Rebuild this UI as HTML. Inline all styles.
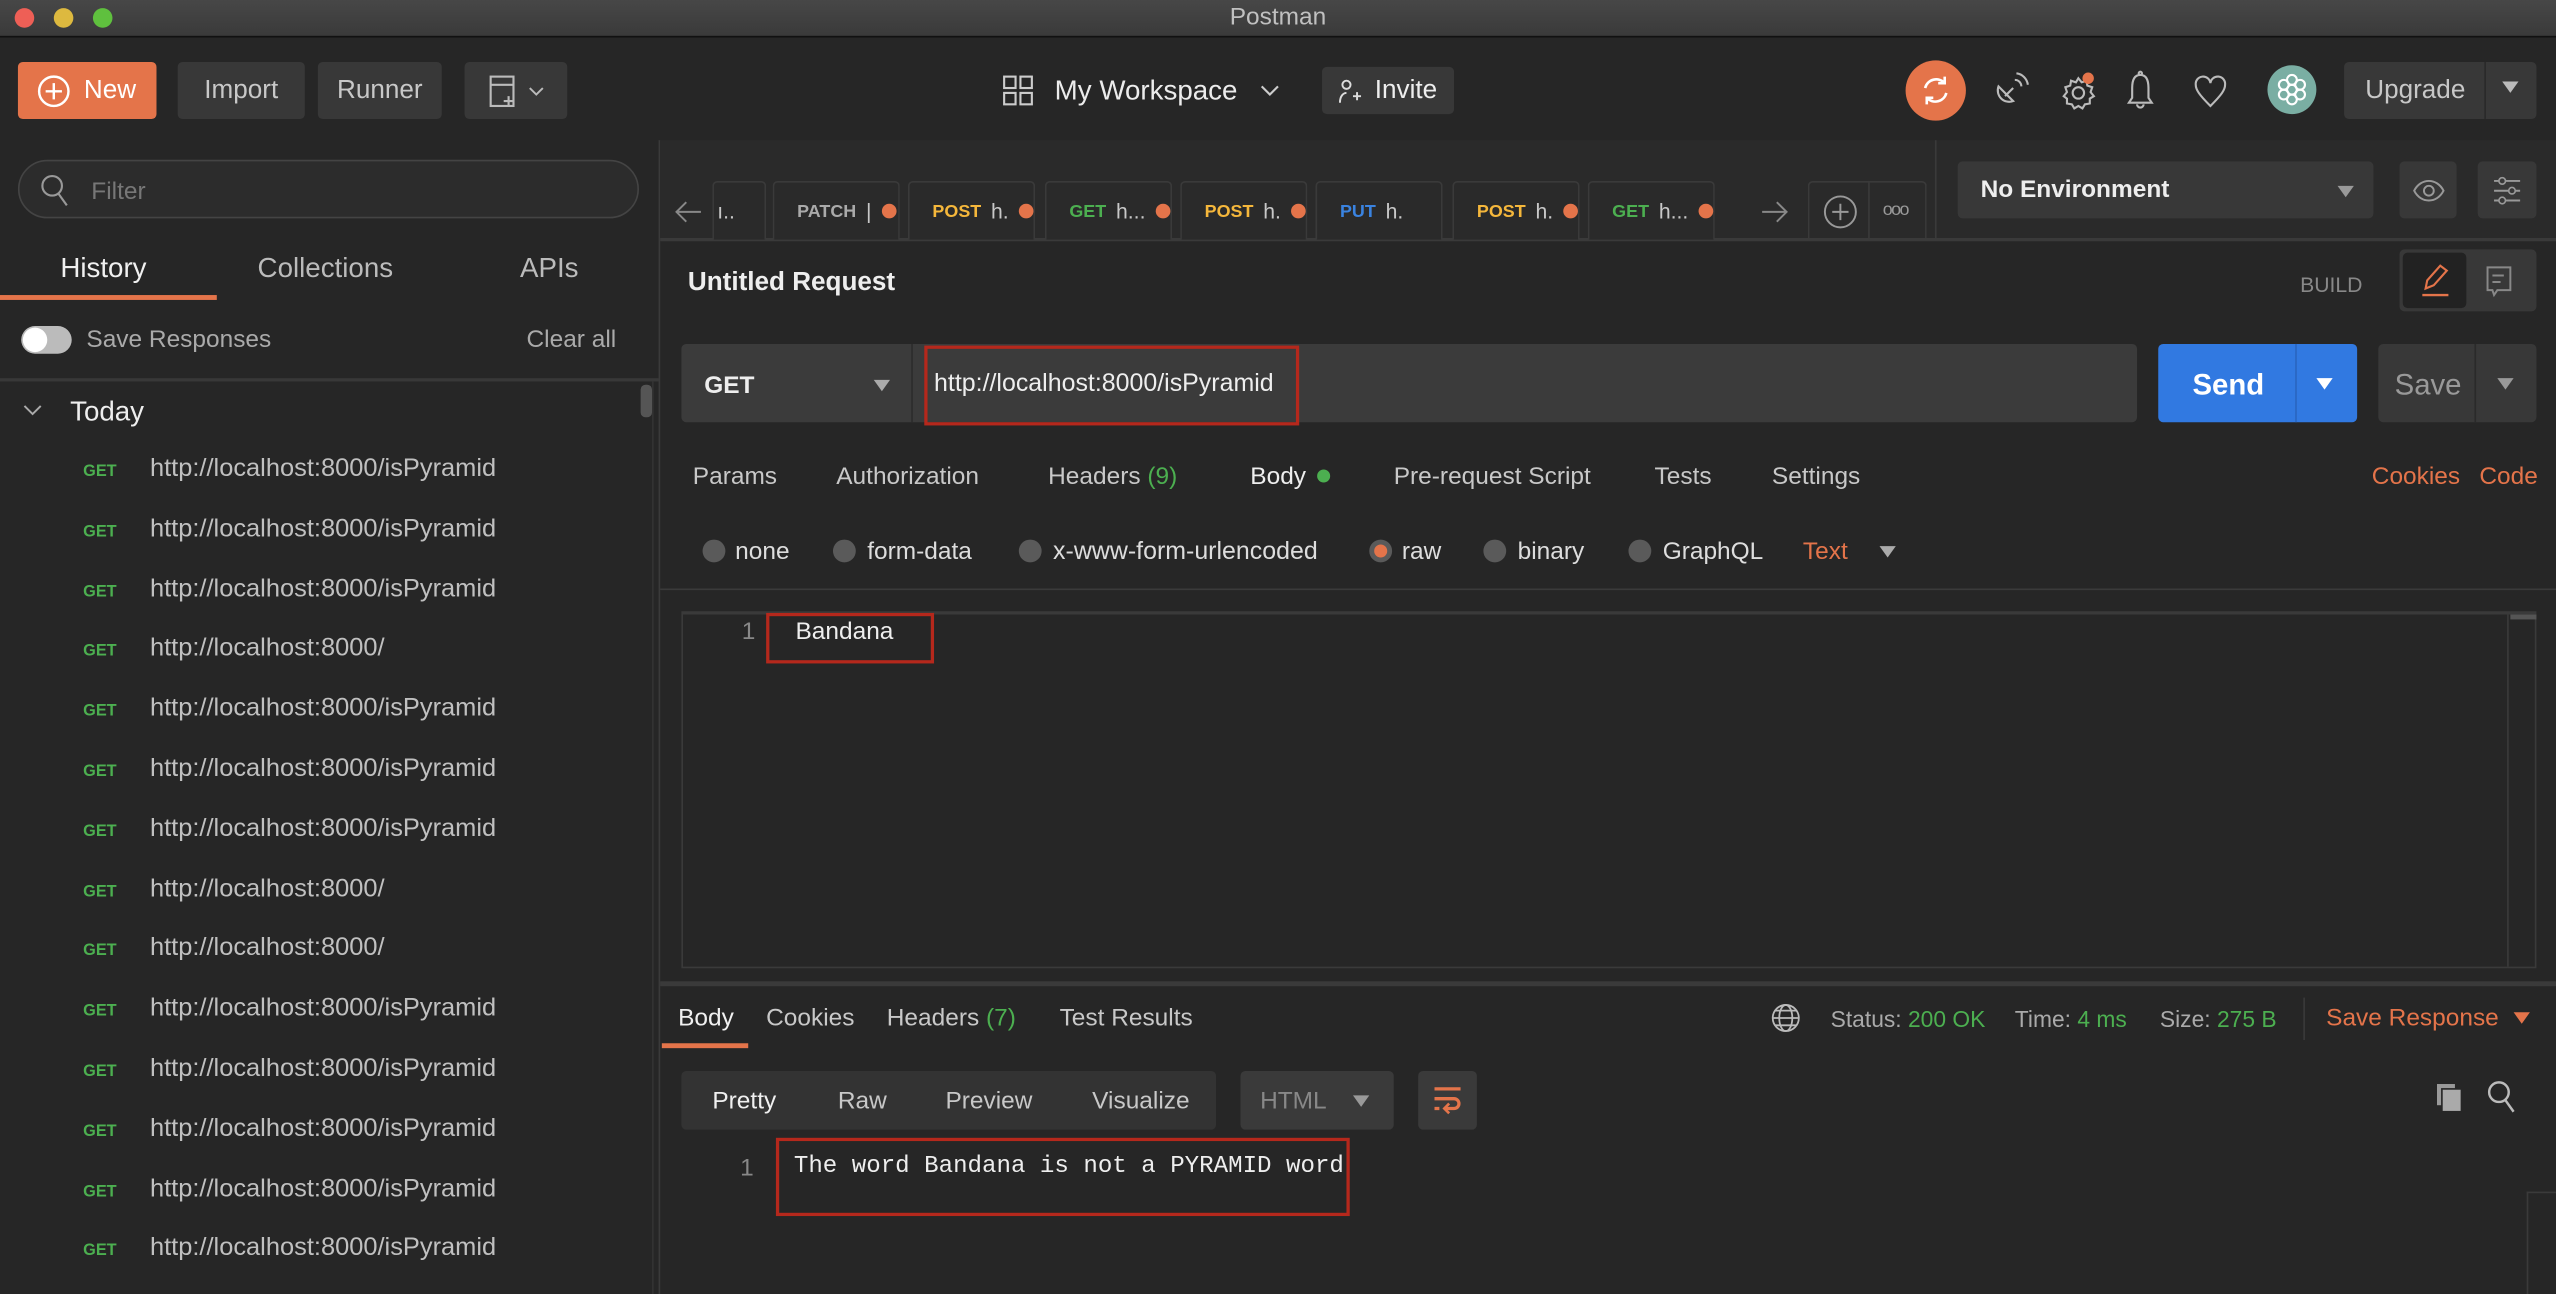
<!DOCTYPE html>
<html><head><meta charset="utf-8"><style>
*{margin:0;padding:0;box-sizing:border-box}
html,body{width:2556px;height:1294px;overflow:hidden;background:#262626}
#s{position:absolute;left:0;top:0;width:1568px;height:794px;transform:scale(1.63010);transform-origin:0 0;background:#262626;font-family:"Liberation Sans",sans-serif;color:#c8c8c8;font-size:15px}
.a{position:absolute;white-space:nowrap}
.btn{position:absolute;background:#383838;border-radius:3px;color:#c8c8c8;font-size:16px;display:flex;align-items:center;justify-content:center}
.g{color:#4caf50;font-weight:bold;font-size:10px}
.o{color:#e4744a}
.dot{display:inline-block;width:9px;height:9px;border-radius:50%;background:#e4744a;vertical-align:1px}
.tab{position:absolute;top:111px;height:36px;width:78px;border:1px solid #3a3a3a;border-bottom:none;border-radius:3px 3px 0 0;background:#2a2a2a;font-size:13px;display:flex;align-items:center;padding-left:14px;gap:6px}
.m{font-size:11px;font-weight:bold}
.rad{position:absolute;top:331px;width:14px;height:14px;border-radius:50%;background:#5a5a5a}
</style></head><body><div id="s">
<div class="a" style="left:0;top:0;width:1568px;height:23px;background:linear-gradient(#474747,#3a3a3a);border-bottom:1px solid #111"></div>
<div class="a" style="left:9px;top:5px;width:12px;height:12px;border-radius:50%;background:#ee5f56"></div>
<div class="a" style="left:33px;top:5px;width:12px;height:12px;border-radius:50%;background:#ddb93f"></div>
<div class="a" style="left:57px;top:5px;width:12px;height:12px;border-radius:50%;background:#5fc03e"></div>
<div class="a" style="left:0;width:1568px;top:2px;text-align:center;color:#c0c0c0;font-size:15px">Postman</div>
<div class="btn" style="left:11px;top:38px;width:85px;height:35px;background:#e4744a;color:#fff;gap:8px"><svg width="20" height="20" viewBox="0 0 20 20"><circle cx="10" cy="10" r="9" fill="none" stroke="#fff" stroke-width="1.5"/><path d="M10 5v10M5 10h10" stroke="#fff" stroke-width="1.5"/></svg>New</div>
<div class="btn" style="left:109px;top:38px;width:78px;height:35px">Import</div>
<div class="btn" style="left:195px;top:38px;width:76px;height:35px">Runner</div>
<div class="btn" style="left:285px;top:38px;width:63px;height:35px;gap:6px"><svg width="18" height="22" viewBox="0 0 18 22"><rect x="1" y="2" width="14" height="18" fill="none" stroke="#bbb" stroke-width="1.3"/><path d="M1 7h14M12 14v6M9 17h6" stroke="#bbb" stroke-width="1.3"/></svg><svg width="10" height="8" viewBox="0 0 10 8"><path d="M1 2l4 4 4-4" fill="none" stroke="#bbb" stroke-width="1.2"/></svg></div>
<svg class="a" style="left:615px;top:46px" width="20" height="20" viewBox="0 0 20 20"><g fill="none" stroke="#ccc" stroke-width="1.3"><rect x="1" y="1" width="7" height="7"/><rect x="11" y="1" width="7" height="7"/><rect x="1" y="11" width="7" height="7"/><rect x="11" y="11" width="7" height="7"/></g></svg>
<div class="a" style="left:647px;top:46px;color:#ececec;font-size:17px">My Workspace</div>
<svg class="a" style="left:773px;top:52px" width="12" height="8" viewBox="0 0 12 8"><path d="M1 1l5 5 5-5" fill="none" stroke="#ccc" stroke-width="1.3"/></svg>
<div class="btn" style="left:811px;top:41px;width:81px;height:29px;color:#eee;gap:8px"><svg width="14" height="16" viewBox="0 0 14 16"><circle cx="5" cy="4" r="2.5" fill="none" stroke="#ddd" stroke-width="1.2"/><path d="M1 15c0-4 2-6 4-6M9 11h5M11.5 8.5v5" stroke="#ddd" stroke-width="1.2" fill="none"/></svg>Invite</div>
<div class="a" style="left:1169px;top:37px;width:37px;height:37px;border-radius:50%;background:#e4744a"></div>
<svg class="a" style="left:1177px;top:45px" width="21" height="21" viewBox="0 0 21 21"><path d="M4 9a7 7 0 0 1 12-3M17 12a7 7 0 0 1-12 3" fill="none" stroke="#fff" stroke-width="1.6"/><path d="M16 2v4h-4M5 19v-4h4" fill="none" stroke="#fff" stroke-width="1.6"/></svg>
<svg class="a" style="left:1222px;top:43px" width="24" height="24" viewBox="0 0 24 24"><g fill="none" stroke="#bbb" stroke-width="1.3"><path d="M4 10a7 7 0 0 0 9 9z"/><path d="M8 16l5-5"/><path d="M14 6a4 4 0 0 1 4 4M15 2a8 8 0 0 1 7 7"/></g></svg>
<svg class="a" style="left:1265px;top:44px" width="22" height="24" viewBox="0 0 22 24"><g fill="none" stroke="#bbb" stroke-width="1.3"><circle cx="10" cy="13" r="3.5"/><path d="M10 4l2 2.5 3-1 .5 3 3 1-1 3 2 2.5-2.5 1.5v3l-3 .5-1.5 2.5-2.5-1.5-2.5 1.5-1.5-2.5-3-.5v-3L1 15l2-2.5-1-3 3-1 .5-3 3 1z"/></g><circle cx="16" cy="4" r="3.5" fill="#e4744a"/></svg>
<svg class="a" style="left:1303px;top:43px" width="20" height="26" viewBox="0 0 20 26"><g fill="none" stroke="#bbb" stroke-width="1.3"><path d="M10 3c-4 0-5 4-5 8v6l-2 3h14l-2-3v-6c0-4-1-8-5-8z"/><path d="M8 21a2 2 0 0 0 4 0"/><circle cx="10" cy="2" r="1"/></g></svg>
<svg class="a" style="left:1345px;top:45px" width="22" height="22" viewBox="0 0 22 22"><path d="M11 20C4 13 2 10 2 7a4.5 4.5 0 0 1 9-1 4.5 4.5 0 0 1 9 1c0 3-2 6-9 13z" fill="none" stroke="#bbb" stroke-width="1.3"/></svg>
<div class="a" style="left:1391px;top:40px;width:30px;height:30px;border-radius:50%;background:#7aaea3"></div>
<svg class="a" style="left:1394px;top:43px" width="24" height="24" viewBox="0 0 24 24"><g fill="none" stroke="#fff" stroke-width="1.3"><circle cx="12" cy="12" r="3"/><circle cx="12" cy="6" r="3"/><circle cx="12" cy="18" r="3"/><circle cx="7" cy="9" r="3"/><circle cx="17" cy="9" r="3"/><circle cx="7" cy="15" r="3"/><circle cx="17" cy="15" r="3"/></g></svg>
<div class="btn" style="left:1438px;top:38px;width:118px;height:35px;justify-content:flex-start;padding-left:13px">Upgrade</div>
<div class="a" style="left:1524px;top:38px;width:1px;height:35px;background:#2a2a2a"></div>
<div class="a" style="left:1535px;top:50px;width:0;height:0;border-left:5px solid transparent;border-right:5px solid transparent;border-top:7px solid #bbb"></div>
<div class="a" style="left:404px;top:86px;width:1px;height:708px;background:#3a3a3a"></div>
<div class="a" style="left:11px;top:98px;width:381px;height:36px;border:1px solid #444;border-radius:18px;background:#2c2c2c"></div>
<svg class="a" style="left:24px;top:106px" width="20" height="22" viewBox="0 0 20 22"><circle cx="8" cy="8" r="6" fill="none" stroke="#999" stroke-width="1.3"/><path d="M12 13l5 7" stroke="#999" stroke-width="1.3"/></svg>
<div class="a" style="left:56px;top:109px;color:#777">Filter</div>
<div class="a" style="left:37px;top:155px;font-size:17px;color:#f0f0f0">History</div>
<div class="a" style="left:158px;top:155px;font-size:17px;color:#bbb">Collections</div>
<div class="a" style="left:319px;top:155px;font-size:17px;color:#bbb">APIs</div>
<div class="a" style="left:0;top:181px;width:133px;height:3px;background:#e4744a"></div>
<div class="a" style="left:13px;top:200px;width:31px;height:17px;border-radius:9px;background:#bbb"></div>
<div class="a" style="left:14px;top:201px;width:15px;height:15px;border-radius:50%;background:#fff"></div>
<div class="a" style="left:53px;top:200px;color:#aaa">Save Responses</div>
<div class="a" style="left:323px;top:200px;color:#aaa">Clear all</div>
<div class="a" style="left:0;top:232px;width:404px;height:2px;background:#383838"></div>
<div class="a" style="left:393px;top:236px;width:7px;height:20px;border-radius:3px;background:#555"></div>
<div class="a" style="left:400px;top:234px;width:1px;height:560px;background:#333"></div>
<svg class="a" style="left:14px;top:247px" width="12" height="9" viewBox="0 0 12 9"><path d="M1 2l5 5 5-5" fill="none" stroke="#aaa" stroke-width="1.2"/></svg>
<div class="a" style="left:43px;top:243px;font-size:17px;color:#eee">Today</div>
<div id="list"></div>
<div class="a" style="left:405px;top:86px;width:1163px;height:62px;background:#2a2a2a"></div>
<div class="a" style="left:405px;top:146px;width:1163px;height:2px;background:#3a3a3a"></div>
<svg class="a" style="left:413px;top:122px" width="18" height="16" viewBox="0 0 18 16"><path d="M17 8H2M8 2L2 8l6 6" fill="none" stroke="#888" stroke-width="1.2"/></svg>
<div class="tab" style="left:437px;width:33px;padding-left:2px">ı..</div>
<div class="tab" style="left:474px;width:78px"><span class="m" style="color:#aaa">PATCH</span><span>|</span><span class="dot"></span></div>
<div class="tab" style="left:557px"><span class="m" style="color:#f5b73b">POST</span><span>h.</span><span class="dot"></span></div>
<div class="tab" style="left:641px"><span class="m" style="color:#4caf50">GET</span><span>h...</span><span class="dot"></span></div>
<div class="tab" style="left:724px"><span class="m" style="color:#f5b73b">POST</span><span>h.</span><span class="dot"></span></div>
<div class="tab" style="left:807px"><span class="m" style="color:#3a83e0">PUT</span><span>h.</span></div>
<div class="tab" style="left:891px"><span class="m" style="color:#f5b73b">POST</span><span>h.</span><span class="dot"></span></div>
<div class="tab" style="left:974px"><span class="m" style="color:#4caf50">GET</span><span>h...</span><span class="dot"></span></div>
<svg class="a" style="left:1080px;top:122px" width="18" height="16" viewBox="0 0 18 16"><path d="M1 8h15M10 2l6 6-6 6" fill="none" stroke="#888" stroke-width="1.2"/></svg>
<div class="a" style="left:1109px;top:111px;width:73px;height:36px;border:1px solid #3a3a3a;border-bottom:none;border-radius:3px 3px 0 0"></div>
<div class="a" style="left:1146px;top:111px;width:1px;height:36px;background:#3a3a3a"></div>
<svg class="a" style="left:1118px;top:119px" width="22" height="22" viewBox="0 0 22 22"><circle cx="11" cy="11" r="9.5" fill="none" stroke="#999" stroke-width="1.2"/><path d="M11 6v10M6 11h10" stroke="#999" stroke-width="1.2"/></svg>
<div class="a" style="left:1155px;top:123px;font-size:11px;color:#999;letter-spacing:-1px">ooo</div>
<div class="a" style="left:1187px;top:86px;width:1px;height:61px;background:#3a3a3a"></div>
<div class="btn" style="left:1201px;top:99px;width:255px;height:35px;justify-content:flex-start;padding-left:14px;color:#eee;font-size:15px;font-weight:bold">No Environment</div>
<div class="a" style="left:1434px;top:114px;border-left:5px solid transparent;border-right:5px solid transparent;border-top:7px solid #999"></div>
<div class="btn" style="left:1472px;top:99px;width:35px;height:35px"><svg width="20" height="16" viewBox="0 0 20 16"><path d="M1 8c4-8 14-8 18 0-4 8-14 8-18 0z" fill="none" stroke="#999" stroke-width="1.2"/><circle cx="10" cy="8" r="3" fill="none" stroke="#999" stroke-width="1.2"/></svg></div>
<div class="btn" style="left:1520px;top:99px;width:36px;height:35px"><svg width="20" height="20" viewBox="0 0 20 20"><path d="M2 4h16M2 10h16M2 16h16" stroke="#999" stroke-width="1.2"/><circle cx="7" cy="4" r="2" fill="#383838" stroke="#999"/><circle cx="13" cy="10" r="2" fill="#383838" stroke="#999"/><circle cx="7" cy="16" r="2" fill="#383838" stroke="#999"/></svg></div>
<div class="a" style="left:422px;top:165px;font-size:16px;font-weight:bold;color:#eee">Untitled Request</div>
<div class="a" style="left:1411px;top:167px;font-size:13px;color:#888">BUILD</div>
<div class="a" style="left:1472px;top:153px;width:84px;height:38px;border-radius:3px;background:#383838"></div>
<div class="a" style="left:1474px;top:155px;width:39px;height:34px;border-radius:3px;background:#222"></div>
<svg class="a" style="left:1483px;top:161px" width="22" height="22" viewBox="0 0 22 22"><path d="M5 16l1-5 8-9 4 3-8 9z" fill="none" stroke="#e4744a" stroke-width="1.3"/><path d="M3 20h16" stroke="#e4744a" stroke-width="1.5"/></svg>
<svg class="a" style="left:1524px;top:162px" width="18" height="22" viewBox="0 0 18 22"><path d="M2 2h14v14H8l-2 3-1-3H2z" fill="none" stroke="#888" stroke-width="1.2"/><path d="M5 7h7M5 11h5" stroke="#888" stroke-width="1.2"/></svg>
<div class="a" style="left:418px;top:211px;width:893px;height:48px;background:#3b3b3b;border-radius:3px"></div>
<div class="a" style="left:559px;top:211px;width:1px;height:48px;background:#2c2c2c"></div>
<div class="a" style="left:432px;top:228px;font-weight:bold;color:#eee">GET</div>
<div class="a" style="left:536px;top:233px;border-left:5px solid transparent;border-right:5px solid transparent;border-top:7px solid #aaa"></div>
<div class="a" style="left:567px;top:212px;width:230px;height:49px;border:2px solid #b5281c"></div>
<div class="a" style="left:573px;top:227px;color:#eee;font-size:15.3px">http://localhost:8000/isPyramid</div>
<div class="a" style="left:1324px;top:211px;width:122px;height:48px;background:#3179e1;border-radius:3px"></div>
<div class="a" style="left:1408px;top:211px;width:1px;height:48px;background:#2a66c0"></div>
<div class="a" style="left:1345px;top:226px;font-size:18px;font-weight:bold;color:#fff">Send</div>
<div class="a" style="left:1421px;top:232px;border-left:5px solid transparent;border-right:5px solid transparent;border-top:7px solid #fff"></div>
<div class="a" style="left:1459px;top:211px;width:97px;height:48px;background:#383838;border-radius:3px"></div>
<div class="a" style="left:1518px;top:211px;width:1px;height:48px;background:#2a2a2a"></div>
<div class="a" style="left:1469px;top:226px;font-size:18px;color:#999">Save</div>
<div class="a" style="left:1532px;top:232px;border-left:5px solid transparent;border-right:5px solid transparent;border-top:7px solid #999"></div>
<div class="a" style="left:425px;top:284px">Params</div>
<div class="a" style="left:513px;top:284px">Authorization</div>
<div class="a" style="left:643px;top:284px">Headers <span style="color:#4caf50">(9)</span></div>
<div class="a" style="left:767px;top:284px;color:#eee">Body <span style="display:inline-block;width:8px;height:8px;border-radius:50%;background:#4caf50;margin-left:3px;vertical-align:1px"></span></div>
<div class="a" style="left:855px;top:284px">Pre-request Script</div>
<div class="a" style="left:1015px;top:284px">Tests</div>
<div class="a" style="left:1087px;top:284px">Settings</div>
<div class="a o" style="left:1455px;top:284px">Cookies</div>
<div class="a o" style="left:1521px;top:284px">Code</div>
<div class="rad" style="left:431px"></div><div class="a" style="left:451px;top:330px;color:#ddd">none</div>
<div class="rad" style="left:511px"></div><div class="a" style="left:532px;top:330px;color:#ddd">form-data</div>
<div class="rad" style="left:625px"></div><div class="a" style="left:646px;top:330px;color:#ddd;font-size:15.3px">x-www-form-urlencoded</div>
<div class="rad" style="left:840px;background:#e4744a;border:3px solid #5a5a5a"></div><div class="a" style="left:860px;top:330px;color:#ddd">raw</div>
<div class="rad" style="left:910px"></div><div class="a" style="left:931px;top:330px;color:#ddd">binary</div>
<div class="rad" style="left:999px"></div><div class="a" style="left:1020px;top:330px;color:#ddd">GraphQL</div>
<div class="a o" style="left:1106px;top:330px">Text</div>
<div class="a" style="left:1153px;top:335px;border-left:5px solid transparent;border-right:5px solid transparent;border-top:7px solid #aaa"></div>
<div class="a" style="left:405px;top:361px;width:1163px;height:1px;background:#3a3a3a"></div>
<div class="a" style="left:418px;top:375px;width:1138px;height:219px;border:1px solid #3a3a3a;border-top:2px solid #3a3a3a"></div>
<div class="a" style="left:1538px;top:377px;width:1px;height:216px;background:#3a3a3a"></div>
<div class="a" style="left:1540px;top:377px;width:16px;height:3px;background:#555"></div>
<div class="a" style="left:455px;top:379px;color:#888">1</div>
<div class="a" style="left:470px;top:376px;width:103px;height:31px;border:2px solid #b5281c"></div>
<div class="a" style="left:488px;top:379px;color:#eee">Bandana</div>
<div class="a" style="left:405px;top:602px;width:1163px;height:3px;background:#3a3a3a"></div>
<div class="a" style="left:416px;top:616px;color:#f0f0f0">Body</div>
<div class="a" style="left:406px;top:640px;width:53px;height:3px;background:#e4744a"></div>
<div class="a" style="left:470px;top:616px">Cookies</div>
<div class="a" style="left:544px;top:616px">Headers <span style="color:#4caf50">(7)</span></div>
<div class="a" style="left:650px;top:616px">Test Results</div>
<svg class="a" style="left:1086px;top:615px" width="19" height="19" viewBox="0 0 19 19"><g fill="none" stroke="#bbb" stroke-width="1.1"><circle cx="9.5" cy="9.5" r="8"/><ellipse cx="9.5" cy="9.5" rx="4" ry="8"/><path d="M1.5 9.5h16M3 5h13M3 14h13"/></g></svg>
<div class="a" style="left:1123px;top:617px;font-size:14px;color:#aaa">Status: <span style="color:#4caf50">200 OK</span></div>
<div class="a" style="left:1236px;top:617px;font-size:14px;color:#aaa">Time: <span style="color:#4caf50">4 ms</span></div>
<div class="a" style="left:1325px;top:617px;font-size:14px;color:#aaa">Size: <span style="color:#4caf50">275 B</span></div>
<div class="a" style="left:1413px;top:612px;width:1px;height:26px;background:#3a3a3a"></div>
<div class="a o" style="left:1427px;top:616px">Save Response</div>
<div class="a" style="left:1542px;top:621px;border-left:5px solid transparent;border-right:5px solid transparent;border-top:7px solid #e4744a"></div>
<div class="a" style="left:418px;top:657px;width:328px;height:36px;background:#333;border-radius:3px"></div>
<div class="a" style="left:437px;top:667px;color:#f0f0f0">Pretty</div>
<div class="a" style="left:514px;top:667px">Raw</div>
<div class="a" style="left:580px;top:667px">Preview</div>
<div class="a" style="left:670px;top:667px">Visualize</div>
<div class="a" style="left:761px;top:657px;width:94px;height:36px;background:#3a3a3a;border-radius:3px"></div>
<div class="a" style="left:773px;top:667px;color:#888">HTML</div>
<div class="a" style="left:830px;top:672px;border-left:5px solid transparent;border-right:5px solid transparent;border-top:7px solid #999"></div>
<div class="a" style="left:870px;top:657px;width:36px;height:36px;background:#3a3a3a;border-radius:3px"></div>
<svg class="a" style="left:878px;top:664px" width="20" height="22" viewBox="0 0 20 22"><g fill="none" stroke="#e4744a" stroke-width="2"><path d="M2 4h16M2 10h12a3 3 0 0 1 0 6H9M2 16h3"/><path d="M11 13l-3 3 3 3" stroke-width="1.6"/></g></svg>
<svg class="a" style="left:1493px;top:663px" width="20" height="20" viewBox="0 0 20 20"><rect x="2" y="2" width="11" height="13" fill="#999"/><rect x="5" y="5" width="12" height="14" fill="#aaa" stroke="#262626"/></svg>
<svg class="a" style="left:1525px;top:662px" width="20" height="22" viewBox="0 0 20 22"><circle cx="8" cy="8" r="6" fill="none" stroke="#bbb" stroke-width="1.5"/><path d="M12 13l5 7" stroke="#bbb" stroke-width="1.5"/></svg>
<div class="a" style="left:454px;top:708px;color:#888">1</div>
<div class="a" style="left:476px;top:698px;width:352px;height:48px;border:2px solid #b5281c"></div>
<div class="a" style="left:487px;top:708px;font-family:'Liberation Mono',monospace;font-size:14.8px;color:#eee">The word Bandana is not a PYRAMID word</div>
<div class="a" style="left:1550px;top:731px;width:1px;height:63px;background:#3a3a3a"></div>
<div class="a" style="left:1550px;top:731px;width:18px;height:1px;background:#3a3a3a"></div>
</div>
<script>
var u=["isPyramid","isPyramid","isPyramid","","isPyramid","isPyramid","isPyramid","","","isPyramid","isPyramid","isPyramid","isPyramid","isPyramid"],h="";
for(var i=0;i<u.length;i++){var y=Math.round(279+i*36.8);h+='<div class="a g" style="left:51px;top:'+(y+5)+'px">GET</div><div class="a" style="left:92px;top:'+y+'px;color:#c0c0c0;font-size:15.6px">http://localhost:8000/'+u[i]+'</div>';}
document.getElementById("list").outerHTML=h;
</script>
</body></html>
